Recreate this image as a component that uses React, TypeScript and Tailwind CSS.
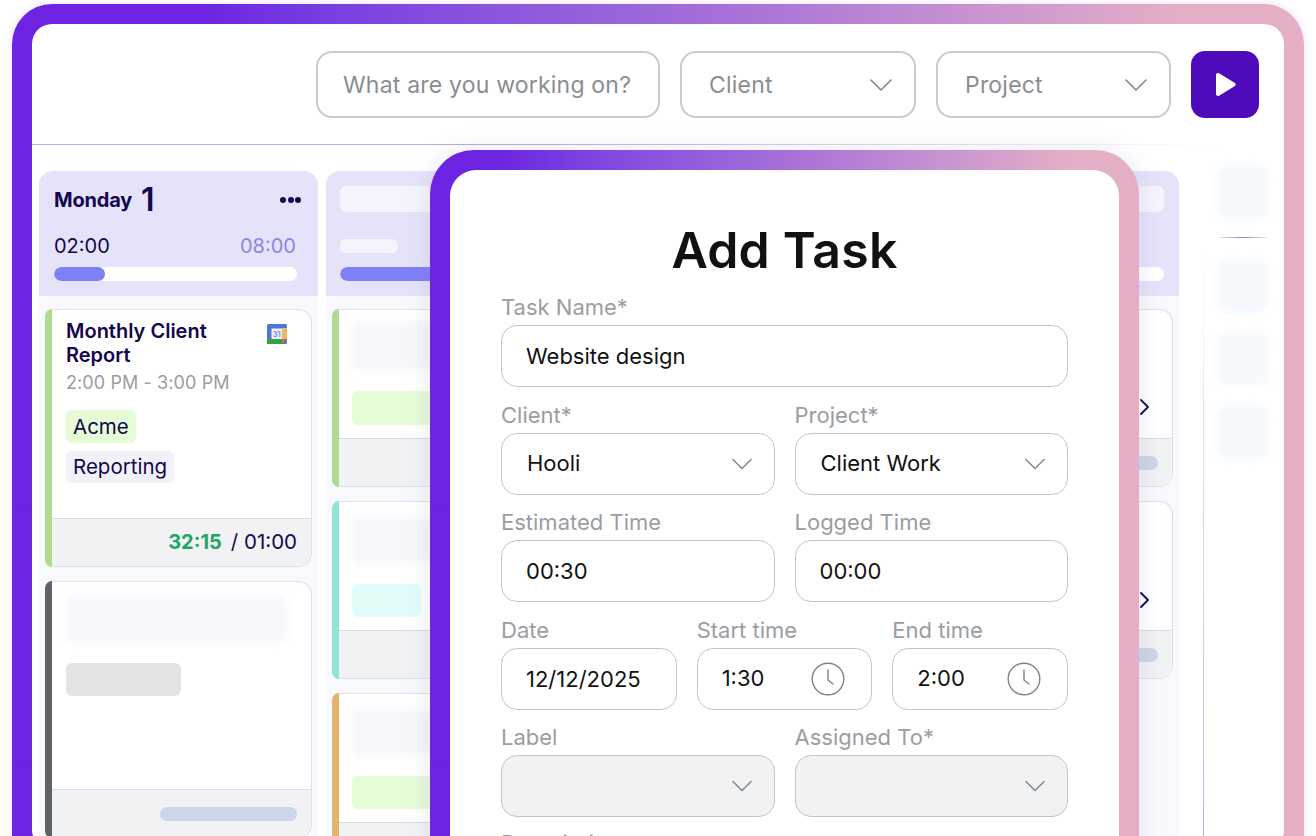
import React from "react";

const font = { fontFamily: "Inter, 'Liberation Sans', sans-serif" };

function Chevron({ className }: { className: string }) {
  return (
    <svg className={className} viewBox="0 0 22 12" fill="none" stroke="#7f8386" strokeWidth="1.5" strokeLinecap="round" strokeLinejoin="round">
      <path d="M1 1l10 10L21 1" />
    </svg>
  );
}

function Clock() {
  return (
    <svg className="w-[34px] h-[34px] shrink-0" viewBox="0 0 34 34" fill="none" stroke="#7f8386" strokeWidth="1.4" strokeLinecap="round" strokeLinejoin="round">
      <circle cx="17" cy="17" r="15.8" />
      <path d="M17 8v10l5 4" />
    </svg>
  );
}

function GCal() {
  return (
    <svg className="w-5 h-5" viewBox="0 0 20 20">
      <rect width="20" height="20" rx="1.5" fill="#4a78d6" />
      <rect x="15" y="4" width="5" height="11" fill="#edb862" />
      <rect y="15" width="15" height="5" fill="#2fa24a" />
      <path d="M15 15h5l-5 5z" fill="#d3692d" />
      <rect x="4.5" y="4.5" width="10.5" height="10.5" fill="#eef0fb" />
      <text x="9.8" y="12.6" textAnchor="middle" fontSize="7.5" fontWeight="700" fill="#7f92d8" fontFamily="Inter, sans-serif">31</text>
    </svg>
  );
}

function Field({ label, children, className = "" }: { label: string; children: React.ReactNode; className?: string }) {
  return (
    <div className={`flex flex-col min-w-0 ${className}`}>
      <div className="h-7 leading-[29px] text-[22px] text-[#9a9da1] mb-1 whitespace-nowrap">{label}</div>
      {children}
    </div>
  );
}

function TextBox({ value, className = "" }: { value: string; className?: string }) {
  return (
    <div className={`h-[62px] rounded-[16px] border-[1.5px] border-[#c2c5c6] bg-white flex items-center pl-[24px] pr-[15px] pt-[1px] text-[22px] text-[#111] ${className}`}>
      {value}
    </div>
  );
}

function SelectBox({ value = "", disabled = false }: { value?: string; disabled?: boolean }) {
  return (
    <div className={`h-[62px] rounded-[16px] border-[1.5px] border-[#c2c5c6] flex items-center justify-between pl-[25px] pr-[22px] text-[22px] text-[#111] ${disabled ? "bg-[#f1f2f4]" : "bg-white"}`}>
      <span>{value}</span>
      <Chevron className="w-[20px] h-[12px]" />
    </div>
  );
}

function TimeBox({ value }: { value: string }) {
  return (
    <div className="h-[62px] rounded-[16px] border-[1.5px] border-[#c2c5c6] bg-white flex items-center justify-between pl-[24px] pr-[26px] text-[22px] text-[#111]">
      <span>{value}</span>
      <Clock />
    </div>
  );
}

function TopSelect({ label, width }: { label: string; width: string }) {
  return (
    <div className={`${width} h-[67px] rounded-[16px] border-2 border-[#c8cacb] flex items-center justify-between pl-[27px] pr-[22px] text-[23px] text-[#8a8d90] tracking-[0.2px]`}>
      <span className="pt-[2px]">{label}</span>
      <Chevron className="w-[22px] h-[12px]" />
    </div>
  );
}

function Card({ bar, h, children, footer }: { bar: string; h: string; children?: React.ReactNode; footer?: React.ReactNode }) {
  return (
    <div className={`flex shrink-0 ${h}`}>
      <div className={`w-[7px] rounded-l-[8px] ${bar}`} />
      <div className="flex-1 min-w-0 flex flex-col rounded-r-[14px] border border-l-0 border-[#dcdeeb] bg-white overflow-hidden">
        <div className="flex-1 min-h-0 relative">{children}</div>
        <div className="h-[48px] shrink-0 border-t border-[#d9dbe8] bg-[#f1f2f4] flex items-center justify-end pr-[14px]">{footer}</div>
      </div>
    </div>
  );
}

function Header({ children }: { children: React.ReactNode }) {
  return <div className="h-[125px] rounded-t-[14px] bg-[#e4e3f9] px-[15px] shrink-0">{children}</div>;
}

function SkeletonHeader({ fill }: { fill: string }) {
  return (
    <Header>
      <div className="-ml-[1px]">
        <div className="h-[26px] pt-0 mt-[15px] rounded-[6px] bg-[#f3f4fd]" />
        <div className="h-[14px] w-[58px] mt-[27px] rounded-[6px] bg-[#f5f6fd]" />
        <div className="h-[14px] mt-[14px] rounded-full bg-white overflow-hidden">
          <div className={`h-full ${fill} bg-[#7f80f5] rounded-full`} />
        </div>
      </div>
    </Header>
  );
}

function SidebarTile({ className }: { className: string }) {
  return <div className={`w-[53px] rounded-[14px] bg-[#f5f9fd] blur-[3px] ${className}`} />;
}

function Column({ children }: { children: React.ReactNode }) {
  return <div className="w-[279px] shrink-0 flex flex-col">{children}</div>;
}

function ColumnBody({ children }: { children: React.ReactNode }) {
  return <div className="flex-1 bg-[#f8f9fd] pt-[13px] pl-[6px] pr-[6px] flex flex-col gap-[14px]">{children}</div>;
}

function FooterPill({ className }: { className: string }) {
  return <div className={`h-[14px] rounded-full bg-[#cdd5e8] ${className}`} />;
}

function FarChevron() {
  return (
    <svg className="w-[9px] h-[16px]" viewBox="0 0 9 16" fill="none" stroke="#14064f" strokeWidth="1.8" strokeLinecap="round" strokeLinejoin="round">
      <path d="M1 1l7 7-7 7" />
    </svg>
  );
}

export default function App() {
  return (
    <div className="relative h-[836px] w-[1316px] overflow-hidden bg-white" style={font}>
      <div className="ml-3 mt-1 w-[1292px] h-[900px] rounded-[40px] bg-linear-to-r from-[#6d24e2] from-15% via-[#a66fd8] via-55% to-[#e4aec6] to-90% p-5 pb-0 shadow-[0_0_10px_rgba(120,60,220,0.15)]">
        <div className="w-[1252px] h-[826px] rounded-[20px] bg-white overflow-hidden flex flex-col">
          {/* top bar */}
          <div className="h-[120px] shrink-0 flex justify-end gap-5 pt-[27px] pr-[25px]">
            <div className="w-[344px] h-[67px] rounded-[16px] border-2 border-[#c8cacb] flex items-center pl-[25px] pt-[2px] text-[23px] text-[#8a8d90] tracking-[0.2px] whitespace-nowrap">
              What are you working on?
            </div>
            <TopSelect label="Client" width="w-[236px]" />
            <TopSelect label="Project" width="w-[235px]" />
            <div className="w-[68px] h-[67px] rounded-[14px] bg-[#4f0abb] flex items-center justify-center">
              <svg className="w-[21px] h-[25px]" viewBox="0 0 21 25" fill="#fff" stroke="#fff" strokeWidth="4" strokeLinejoin="round">
                <path d="M3 3v19L18.5 12.5z" />
              </svg>
            </div>
          </div>
          <div className="h-[1px] shrink-0 bg-linear-to-r from-[#b5b1de] from-40% to-transparent to-95%" />

          {/* board */}
          <div className="flex-1 min-h-0 flex pl-[7px] pt-[26px]">
            <div className="flex gap-2 shrink-0">
              <Column>
                <Header>
                  <div className="flex items-center h-[40px] mt-[9px] text-[#14064f]">
                    <span className="text-[20px] font-bold tracking-[-0.2px]">Monday</span>
                    <span className="text-[32px] font-semibold ml-[9px]">1</span>
                    <span className="ml-auto mr-[2px] flex gap-[1.5px]">
                      <i className="w-[6px] h-[6px] rounded-full bg-[#14064f]" />
                      <i className="w-[6px] h-[6px] rounded-full bg-[#14064f]" />
                      <i className="w-[6px] h-[6px] rounded-full bg-[#14064f]" />
                    </span>
                  </div>
                  <div className="flex justify-between mt-[14px] pr-[7px] h-[24px] items-center text-[20px]">
                    <span className="text-[#14064f]">02:00</span>
                    <span className="text-[#8b86e0]">08:00</span>
                  </div>
                  <div className="h-[14px] mt-[9px] mr-[6px] rounded-full bg-white overflow-hidden">
                    <div className="h-full w-[51px] bg-[#7f80f5] rounded-full" />
                  </div>
                </Header>
                <ColumnBody>
                  <Card
                    bar="bg-[#aedb8e]"
                    h="h-[258px]"
                    footer={
                      <span className="text-[20.5px] text-[#14064f] whitespace-nowrap">
                        <span className="font-bold text-[#22a565] text-[20px]">32:15</span>
                        <span className="ml-[9px]">/ 01:00</span>
                      </span>
                    }
                  >
                    <div className="flex justify-between pl-[14px] pr-[24px] pt-[9px]">
                      <div className="text-[20px] leading-[24px] font-semibold text-[#14064f]">
                        Monthly Client
                        <br />
                        Report
                      </div>
                      <div className="mt-[5px]">
                        <GCal />
                      </div>
                    </div>
                    <div className="pl-[14px] mt-[3px] text-[18px] leading-[26px] text-[#9a9da1] tracking-[0.1px]">2:00 PM - 3:00 PM</div>
                    <div className="flex flex-col items-start gap-[8px] pl-[14px] mt-[14px] text-[20.5px] text-[#14064f]">
                      <span className="h-[33px] px-[7px] leading-[33px] rounded-[6px] bg-[#e6fcd6]">Acme</span>
                      <span className="h-[32px] px-[7px] leading-[32px] rounded-[6px] bg-[#f1f2f7]">Reporting</span>
                    </div>
                  </Card>
                  <Card bar="bg-[#5f6368]" h="h-[257px]" footer={<FooterPill className="w-[137px]" />}>
                    <div className="ml-[14px] mr-[24px] mt-[15px] h-[45px] rounded-[6px] bg-[#f5f7fc] blur-[3px]" />
                    <div className="ml-[14px] mt-[21px] w-[115px] h-[33px] rounded-[6px] bg-[#e3e3e3]" />
                  </Card>
                </ColumnBody>
              </Column>

              <Column>
                <SkeletonHeader fill="w-[150px]" />
                <ColumnBody>
                  <Card bar="bg-[#aedb8e]" h="h-[178px]">
                    <div className="mx-[13px] mt-[12px] h-[48px] rounded-[6px] bg-[#f5f7fc] blur-[3px]" />
                    <div className="ml-[13px] mt-[21px] w-[115px] h-[34px] rounded-[6px] bg-[#e6fcd6]" />
                  </Card>
                  <Card bar="bg-[#8fe3d7]" h="h-[178px]">
                    <div className="mx-[13px] mt-[15px] h-[46px] rounded-[6px] bg-[#f5f7fc] blur-[3px]" />
                    <div className="ml-[13px] mt-[21px] w-[69px] h-[33px] rounded-[6px] bg-[#e2fcfa]" />
                  </Card>
                  <Card bar="bg-[#e5b26a]" h="h-[178px]">
                    <div className="mx-[13px] mt-[15px] h-[46px] rounded-[6px] bg-[#f5f7fc] blur-[3px]" />
                    <div className="ml-[13px] mt-[21px] w-[115px] h-[33px] rounded-[6px] bg-[#e6fcd6]" />
                  </Card>
                </ColumnBody>
              </Column>

              <Column>
                <SkeletonHeader fill="w-[51px]" />
                <ColumnBody>
                  <Card bar="bg-[#aedb8e]" h="h-[178px]" />
                </ColumnBody>
              </Column>

              <Column>
                <SkeletonHeader fill="w-0" />
                <ColumnBody>
                  <Card bar="bg-[#aedb8e]" h="h-[178px]" footer={<FooterPill className="w-[60px]" />}>
                    <div className="flex justify-end pr-[23px] pt-[89px]">
                      <FarChevron />
                    </div>
                  </Card>
                  <Card bar="bg-[#8fe3d7]" h="h-[178px]" footer={<FooterPill className="w-[60px]" />}>
                    <div className="flex justify-end pr-[23px] pt-[90px]">
                      <FarChevron />
                    </div>
                  </Card>
                </ColumnBody>
              </Column>
            </div>

            <div className="ml-6 w-[1px] shrink-0 -mt-[26px] bg-linear-to-b from-transparent from-15% via-[#e4e4f3] via-40% to-[#b6b5da]" />

            <div className="ml-3 flex flex-col items-start -mt-[6px]">
              <SidebarTile className="h-[54px]" />
              <div className="mt-[18px] w-[48px] ml-[3px] h-[1px] bg-linear-to-r from-[#e4e4f3] via-[#8b88b8] to-[#e4e4f3]" />
              <SidebarTile className="h-[54px] mt-[21px]" />
              <SidebarTile className="h-[54px] mt-[19px]" />
              <SidebarTile className="h-[54px] mt-[19px]" />
            </div>
          </div>
        </div>
      </div>

      {/* Add Task modal */}
      <div className="absolute left-[430px] top-[150px] w-[709px] h-[760px] rounded-[44px] bg-linear-to-r from-[#6d24e2] from-10% via-[#a66fd8] via-50% to-[#e4aec6] to-90% p-5 shadow-[0_0_24px_rgba(130,120,200,0.18)]">
        <div className="h-full rounded-[26px] bg-white px-[51px] pt-[50px]">
          <h1 className="h-[60px] leading-[60px] text-center text-[50px] font-semibold text-[#111] tracking-[0.2px] mb-[13px]">Add Task</h1>
          <div className="flex flex-col gap-[13.5px]">
            <Field label="Task Name*">
              <TextBox value="Website design" />
            </Field>
            <div className="grid grid-cols-2 gap-5">
              <Field label="Client*">
                <SelectBox value="Hooli" />
              </Field>
              <Field label="Project*">
                <SelectBox value="Client Work" />
              </Field>
            </div>
            <div className="grid grid-cols-2 gap-5">
              <Field label="Estimated Time">
                <TextBox value="00:30" />
              </Field>
              <Field label="Logged Time">
                <TextBox value="00:00" />
              </Field>
            </div>
            <div className="grid grid-cols-3 gap-5">
              <Field label="Date">
                <TextBox value="12/12/2025" />
              </Field>
              <Field label="Start time">
                <TimeBox value="1:30" />
              </Field>
              <Field label="End time">
                <TimeBox value="2:00" />
              </Field>
            </div>
            <div className="grid grid-cols-2 gap-5">
              <Field label="Label">
                <SelectBox disabled />
              </Field>
              <Field label="Assigned To*">
                <SelectBox disabled />
              </Field>
            </div>
            <Field label="Description" className="-mt-[2px]">
              <div />
            </Field>
          </div>
        </div>
      </div>
    </div>
  );
}
